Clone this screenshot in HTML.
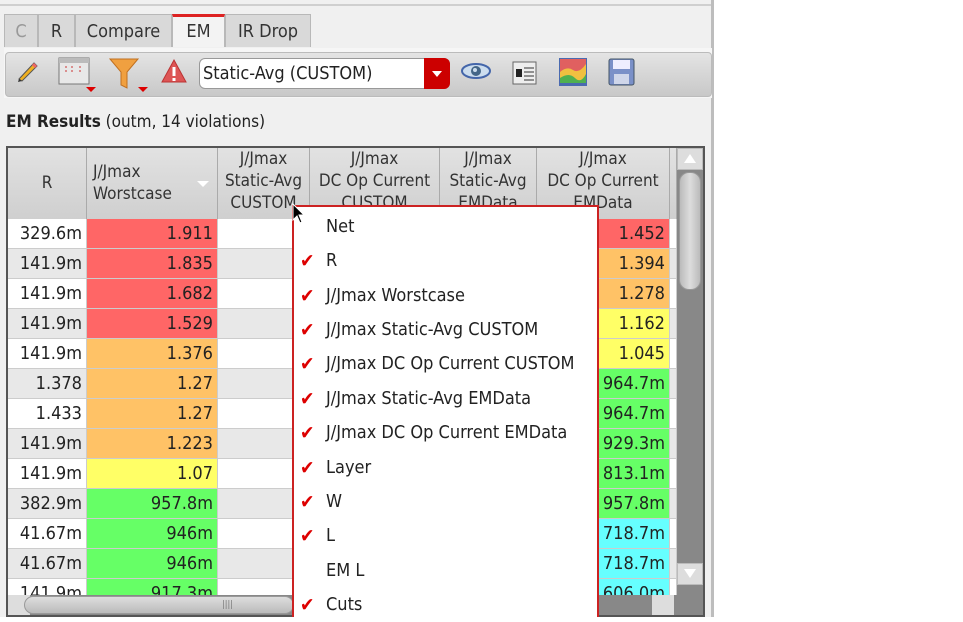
<!DOCTYPE html>
<html><head><meta charset="utf-8"><style>
*{box-sizing:border-box;margin:0;padding:0}
body{width:963px;height:617px;overflow:hidden;background:#fff;font-family:"DejaVu Sans Condensed","Liberation Sans",sans-serif;font-size:17px;color:#222;position:relative}
.a{position:absolute}
.tab{position:absolute;top:14px;height:33px;background:#d9d9d9;border:1px solid #b8b8b8;border-bottom:none;text-align:center;line-height:33px;font-size:18px;color:#333}
.cell{position:absolute;height:30px;line-height:30px;text-align:right;padding-right:4px;font-size:18px;border-bottom:1px solid #ccc;border-right:1px solid #ccc;white-space:nowrap;overflow:hidden}
.hd{position:absolute;top:148px;height:71px;background:linear-gradient(#e2e2e2,#cfcfcf);border-right:1px solid #aaa;text-align:center;font-size:17px;line-height:22px;color:#333;overflow:hidden;white-space:nowrap}
.mi{position:absolute;left:300px;height:34px;line-height:34px;font-size:18px;color:#222;white-space:nowrap}
.ck{position:absolute;left:0px;color:#d00;font-size:19px;font-weight:bold}
</style></head><body>
<div class="a" style="left:0;top:0;width:714px;height:617px;background:#f0f0f0"></div>
<div class="a" style="left:0;top:4px;width:714px;height:2px;background:#cfcfcf"></div>
<div class="a" style="left:711px;top:0;width:3px;height:617px;background:#bdbdbd"></div>
<div class="tab" style="left:4px;width:34px;color:#999">C</div>
<div class="tab" style="left:38px;width:37px">R</div>
<div class="tab" style="left:75px;width:97px">Compare</div>
<div class="tab" style="left:172px;width:53px;background:#f3f3f3;border-top:3px solid #d22;line-height:30px">EM</div>
<div class="tab" style="left:225px;width:86px">IR Drop</div>
<div class="a" style="left:4px;top:48px;width:708px;height:50px;background:#f6f6f6"></div>
<div class="a" style="left:5px;top:52px;width:707px;height:45px;background:linear-gradient(#e4e4e4,#c8c8c8);border:1px solid #bbb;border-radius:4px"></div>
<svg class="a" style="left:14px;top:58px" width="26" height="26"><path d="M5 21 L20 5 L23 8 L8 23 Z" fill="#f0b020" stroke="#555"/><path d="M5 21 L4 24 L8 23" fill="#333"/><path d="M19 6 L22 9" stroke="#e66" stroke-width="3"/></svg>
<svg class="a" style="left:58px;top:56px" width="50" height="36"><rect x="1" y="2" width="30" height="26" fill="#e8e8e8" stroke="#777"/><rect x="1" y="2" width="30" height="5" fill="#bbb"/><path d="M8 10v8M14 10v8M22 10v8" stroke="#c33" stroke-dasharray="2 2"/><path d="M28 31h10l-5 5z" fill="#d00"/></svg>
<svg class="a" style="left:108px;top:56px" width="44" height="38"><path d="M2 3h28l-11 13v16l-6 -3v-13z" fill="#f0a040" stroke="#c07020"/><path d="M30 31h10l-5 5z" fill="#d00"/></svg>
<svg class="a" style="left:160px;top:58px" width="28" height="28"><path d="M14 2 L26 24 H2 Z" fill="#dd5555" stroke="#b33"/><rect x="12.5" y="9" width="3" height="9" fill="#fff"/><rect x="12.5" y="20" width="3" height="3" fill="#fff"/></svg>
<div class="a" style="left:199px;top:58px;width:251px;height:31px;background:#fff;border:1px solid #999;border-radius:6px;line-height:29px;padding-left:3px;font-size:18px;white-space:nowrap">Static-Avg (CUSTOM)</div>
<div class="a" style="left:424px;top:58px;width:26px;height:31px;background:#c00;border-radius:0 6px 6px 0"></div>
<div class="a" style="left:432px;top:71px;width:0;height:0;border-left:5px solid transparent;border-right:5px solid transparent;border-top:6px solid #fff"></div>
<svg class="a" style="left:460px;top:60px" width="32" height="22"><ellipse cx="16" cy="11" rx="14" ry="7" fill="#cde" stroke="#46a" stroke-width="2"/><circle cx="16" cy="11" r="5" fill="#468"/><circle cx="15" cy="10" r="2" fill="#cde"/></svg>
<svg class="a" style="left:512px;top:60px" width="26" height="26"><rect x="1" y="2" width="23" height="22" fill="#eee" stroke="#666"/><path d="M4 9h6v8h-6z" fill="#222"/><path d="M12 8h10M12 12h10M12 16h10M12 20h10" stroke="#333"/></svg>
<svg class="a" style="left:559px;top:58px" width="28" height="28"><rect x="0" y="0" width="28" height="28" fill="#4a6ab0"/><rect x="1" y="1" width="26" height="24" fill="#e06060"/><path d="M1 14 Q8 8 14 12 T27 6 V25 H1Z" fill="#f0c040"/><path d="M1 20 Q10 14 16 20 T27 16 V25 H1Z" fill="#50b050"/></svg>
<svg class="a" style="left:608px;top:58px" width="28" height="28"><rect x="1" y="1" width="25" height="26" rx="2" fill="#7a90c8" stroke="#456"/><rect x="5" y="2" width="17" height="9" fill="#eef"/><rect x="6" y="16" width="15" height="10" fill="#cfd6ea"/></svg>
<div class="a" style="left:6px;top:111px;font-size:17px;line-height:22px;white-space:nowrap"><b>EM Results</b> (outm, 14 violations)</div>
<div class="a" style="left:6px;top:146px;width:699px;height:471px;border:2px solid #555;background:#fff"></div>
<div class="hd" style="left:8px;width:79px;line-height:71px">R</div>
<div class="hd" style="left:87px;width:131px;padding-top:13px;text-align:left;padding-left:6px">J/Jmax<br>Worstcase</div>
<div class="a" style="left:197px;top:181px;border-left:6px solid transparent;border-right:6px solid transparent;border-top:6px solid #fff"></div>
<div class="hd" style="left:218px;width:92px">J/Jmax<br>Static-Avg<br>CUSTOM</div>
<div class="hd" style="left:310px;width:130px">J/Jmax<br>DC Op Current<br>CUSTOM</div>
<div class="hd" style="left:440px;width:97px">J/Jmax<br>Static-Avg<br>EMData</div>
<div class="hd" style="left:537px;width:133px">J/Jmax<br>DC Op Current<br>EMData</div>
<div class="hd" style="left:670px;width:7px"></div>
<div id="rows"></div>
<script>
var R=["329.6m","141.9m","141.9m","141.9m","141.9m","1.378","1.433","141.9m","141.9m","382.9m","41.67m","41.67m","141.9m"];
var W=[["1.911","#ff6666"],["1.835","#ff6666"],["1.682","#ff6666"],["1.529","#ff6666"],["1.376","#ffc266"],["1.27","#ffc266"],["1.27","#ffc266"],["1.223","#ffc266"],["1.07","#ffff66"],["957.8m","#66ff66"],["946m","#66ff66"],["946m","#66ff66"],["917.3m","#66ff66"]];
var E=[["1.452","#ff6666"],["1.394","#ffc266"],["1.278","#ffc266"],["1.162","#ffff66"],["1.045","#ffff66"],["964.7m","#66ff66"],["964.7m","#66ff66"],["929.3m","#66ff66"],["813.1m","#66ff66"],["957.8m","#66ff66"],["718.7m","#66ffff"],["718.7m","#66ffff"],["606.0m","#66ffff"]];
var h="";
for(var i=0;i<13;i++){var t=219+30*i,bg=i%2?"#e8e8e8":"#fff";
h+='<div class="cell" style="left:8px;top:'+t+'px;width:79px;background:'+bg+'">'+R[i]+'</div>';
h+='<div class="cell" style="left:87px;top:'+t+'px;width:131px;background:'+W[i][1]+'">'+W[i][0]+'</div>';
h+='<div class="cell" style="left:218px;top:'+t+'px;width:452px;background:'+bg+'"></div>';
h+='<div class="cell" style="left:595px;top:'+t+'px;width:75px;background:'+E[i][1]+'">'+E[i][0]+'</div>';
h+='<div class="cell" style="left:670px;top:'+t+'px;width:7px;background:'+bg+'"></div>';}
document.getElementById('rows').innerHTML=h;
</script>
<div class="a" style="left:677px;top:148px;width:26px;height:467px;background:#888"></div>
<div class="a" style="left:677px;top:148px;width:26px;height:22px;background:#ddd;border:1px solid #bbb"></div>
<div class="a" style="left:684px;top:154px;border-left:6px solid transparent;border-right:6px solid transparent;border-bottom:9px solid #fff"></div>
<div class="a" style="left:679px;top:172px;width:22px;height:118px;background:linear-gradient(90deg,#bbb,#ddd,#bbb);border:1px solid #999;border-radius:10px"></div>
<div class="a" style="left:677px;top:563px;width:26px;height:22px;background:#ddd;border:1px solid #bbb"></div>
<div class="a" style="left:684px;top:569px;border-left:6px solid transparent;border-right:6px solid transparent;border-top:9px solid #fff"></div>
<div class="a" style="left:8px;top:595px;width:669px;height:20px;background:#888"></div>
<div class="a" style="left:8px;top:595px;width:22px;height:20px;background:#ddd"></div>
<div class="a" style="left:24px;top:596px;width:270px;height:18px;background:linear-gradient(#ddd,#bbb);border:1px solid #999;border-radius:9px"></div>
<div class="a" style="left:222px;top:600px;font-size:9px;color:#777">||||</div>
<div class="a" style="left:652px;top:595px;width:22px;height:20px;background:#ddd"></div>
<div class="a" style="left:292px;top:205px;width:307px;height:412px;background:#fff;border:2px solid #cc2222;border-bottom:none"></div>
<div class="mi" style="top:210px;left:326px">Net</div>
<div class="mi" style="top:244px"><span class="ck">✔</span><span style="margin-left:26px">R</span></div>
<div class="mi" style="top:279px"><span class="ck">✔</span><span style="margin-left:26px">J/Jmax Worstcase</span></div>
<div class="mi" style="top:313px"><span class="ck">✔</span><span style="margin-left:26px">J/Jmax Static-Avg CUSTOM</span></div>
<div class="mi" style="top:347px"><span class="ck">✔</span><span style="margin-left:26px">J/Jmax DC Op Current CUSTOM</span></div>
<div class="mi" style="top:382px"><span class="ck">✔</span><span style="margin-left:26px">J/Jmax Static-Avg EMData</span></div>
<div class="mi" style="top:416px"><span class="ck">✔</span><span style="margin-left:26px">J/Jmax DC Op Current EMData</span></div>
<div class="mi" style="top:451px"><span class="ck">✔</span><span style="margin-left:26px">Layer</span></div>
<div class="mi" style="top:485px"><span class="ck">✔</span><span style="margin-left:26px">W</span></div>
<div class="mi" style="top:519px"><span class="ck">✔</span><span style="margin-left:26px">L</span></div>
<div class="mi" style="top:554px;left:326px">EM L</div>
<div class="mi" style="top:588px"><span class="ck">✔</span><span style="margin-left:26px">Cuts</span></div>
<svg class="a" style="left:292px;top:203px" width="14" height="22"><path d="M1 1 L1 17 L5 13 L8 20 L10 19 L7 12 L12 12 Z" fill="#000" stroke="#fff"/></svg>
</body></html>
